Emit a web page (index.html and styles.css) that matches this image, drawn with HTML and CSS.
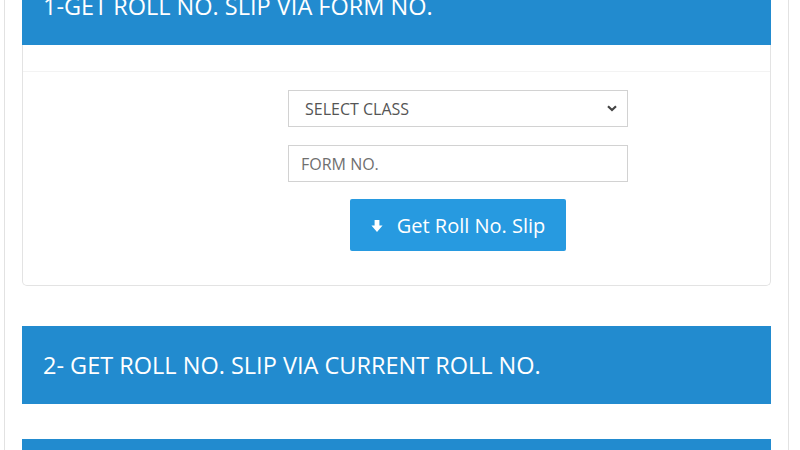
FILE: index.html
```html
<!DOCTYPE html>
<html lang="en">
<head>
    <meta charset="UTF-8">
    <meta name="viewport" content="width=device-width, initial-scale=1.0">
    <title>Roll No. Slip</title>
    <link rel="stylesheet" href="styles.css">
</head>
<body>
    <div class="page">
        <div class="section">
            <h3 class="section-title">1-GET ROLL NO. SLIP VIA FORM NO.</h3>
            <div class="panel">
                <div class="panel-heading"></div>
                <div class="panel-body">
                    <div class="form-col">
                        <div class="select-wrap">
                            <select class="form-control">
                                <option>SELECT CLASS</option>
                            </select>
                            <svg class="select-arrow" width="10" height="7" viewBox="0 0 10 7">
                                <path d="M1 1.2 L5 5 L9 1.2" fill="none" stroke="#444" stroke-width="2.2"/>
                            </svg>
                        </div>
                        <input type="text" class="form-control" placeholder="FORM NO.">
                        <button type="button" class="btn-slip">
                            <svg class="btn-icon" width="12" height="12" viewBox="0 0 11 11">
                                <path d="M3.3 0 H7.7 V5 H10.6 L5.5 11 L0.4 5 H3.3 Z" fill="#fff"/>
                            </svg>
                            Get Roll No. Slip
                        </button>
                    </div>
                </div>
            </div>
        </div>

        <div class="section">
            <h3 class="section-title">2- GET ROLL NO. SLIP VIA CURRENT ROLL NO.</h3>
        </div>

        <div class="section">
            <h3 class="section-title">3- GET ROLL NO. SLIP VIA NAME</h3>
        </div>
    </div>
</body>
</html>
```

FILE: styles.css
```css
body {
    margin: 0;
    font-family: "Open Sans", Arial, sans-serif;
    background-color: #ffffff;
    overflow: hidden;
}

.page {
    width: 749px;
    margin: -33px 0 0 4px;
    padding: 0 17px 40px;
    border-left: 1px solid #e2e2e2;
    border-right: 1px solid #e2e2e2;
}

.section {
    margin-bottom: 40px;
}

.section + .section {
    margin-bottom: 35px;
}

.section-title {
    margin: 0;
    padding: 27px 21px;
    background-color: #228bcf;
    color: #ffffff;
    font-size: 23.5px;
    font-weight: 400;
    line-height: 24px;
}

.panel {
    border: 1px solid #e3e3e3;
    border-top: none;
    border-radius: 0 0 5px 5px;
    background-color: #ffffff;
}

.panel-heading {
    height: 26px;
    border-bottom: 1px solid #f3f3f3;
}

.panel-body {
    padding: 18px 0 34px;
}

.form-col {
    width: 340px;
    margin-left: 265px;
    display: flex;
    flex-direction: column;
    gap: 18px;
}

.select-wrap {
    position: relative;
}

.form-control {
    box-sizing: border-box;
    width: 100%;
    height: 37px;
    margin: 0;
    border: 1px solid #d2d2d2;
    border-radius: 0;
    background-color: #ffffff;
    font-family: "Open Sans", Arial, sans-serif;
    font-size: 16px;
    color: #555555;
    outline: none;
}

select.form-control {
    appearance: none;
    -webkit-appearance: none;
    padding: 0 16px;
}

input.form-control {
    padding: 0 12px;
}

input.form-control::placeholder {
    color: #6f6f6f;
}

.select-arrow {
    position: absolute;
    right: 11px;
    top: 15px;
}

.btn-slip {
    align-self: center;
    width: 216px;
    height: 52px;
    margin-top: -1px;
    border: none;
    border-radius: 2px;
    background-color: #279ae0;
    color: #ffffff;
    font-family: "Open Sans", Arial, sans-serif;
    font-size: 20px;
    display: flex;
    align-items: center;
    justify-content: center;
    gap: 14px;
    cursor: pointer;
}

.btn-icon {
    margin-top: 2px;
}
```
